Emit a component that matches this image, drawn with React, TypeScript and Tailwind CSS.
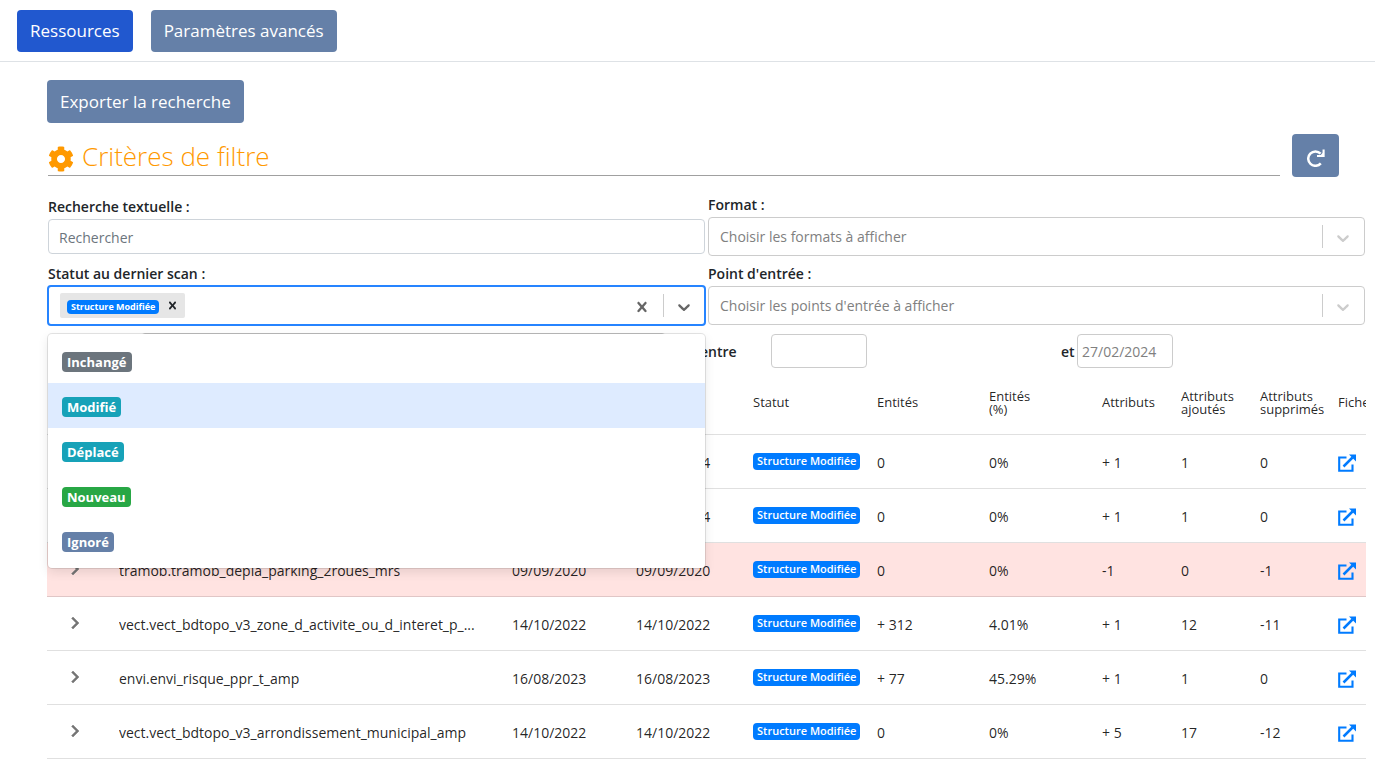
import { useState } from 'react';
import { FaCog } from 'react-icons/fa';

const statuses = [
  { label: 'Inchangé', color: 'bg-[#6c757d]' },
  { label: 'Modifié', color: 'bg-[#17a2b8]' },
  { label: 'Déplacé', color: 'bg-[#17a2b8]' },
  { label: 'Nouveau', color: 'bg-[#28a745]' },
  { label: 'Ignoré', color: 'bg-[#6580a8]' },
];

const rows = [
  { name: '', created: '', scanned: '27/02/2024', entities: '0', percent: '0%', attrs: '+ 1', added: '1', removed: '0' },
  { name: '', created: '', scanned: '27/02/2024', entities: '0', percent: '0%', attrs: '+ 1', added: '1', removed: '0' },
  {
    name: 'tramob.tramob_depla_parking_2roues_mrs',
    created: '09/09/2020',
    scanned: '09/09/2020',
    entities: '0',
    percent: '0%',
    attrs: '-1',
    added: '0',
    removed: '-1',
    alert: true,
  },
  {
    name: 'vect.vect_bdtopo_v3_zone_d_activite_ou_d_interet_p_...',
    created: '14/10/2022',
    scanned: '14/10/2022',
    entities: '+ 312',
    percent: '4.01%',
    attrs: '+ 1',
    added: '12',
    removed: '-11',
  },
  {
    name: 'envi.envi_risque_ppr_t_amp',
    created: '16/08/2023',
    scanned: '16/08/2023',
    entities: '+ 77',
    percent: '45.29%',
    attrs: '+ 1',
    added: '1',
    removed: '0',
  },
  {
    name: 'vect.vect_bdtopo_v3_arrondissement_municipal_amp',
    created: '14/10/2022',
    scanned: '14/10/2022',
    entities: '0',
    percent: '0%',
    attrs: '+ 5',
    added: '17',
    removed: '-12',
  },
];

const ChevronDown = () => (
  <svg viewBox="0 0 20 20" className="w-5 h-5 fill-current" aria-hidden="true">
    <path d="M4.516 7.548c0.436-0.446 1.043-0.481 1.576 0l3.908 3.747 3.908-3.747c0.533-0.481 1.141-0.446 1.574 0 0.436 0.445 0.408 1.197 0 1.615-0.406 0.418-4.695 4.502-4.695 4.502-0.217 0.223-0.502 0.335-0.787 0.335s-0.57-0.112-0.789-0.335c0 0-4.287-4.084-4.695-4.502s-0.436-1.17 0-1.615z" />
  </svg>
);

const Cross = ({ className }: { className: string }) => (
  <svg viewBox="0 0 20 20" className={`fill-current ${className}`} aria-hidden="true">
    <path d="M14.348 14.849c-0.469 0.469-1.229 0.469-1.697 0l-2.651-3.030-2.651 3.029c-0.469 0.469-1.229 0.469-1.697 0-0.469-0.469-0.469-1.229 0-1.697l2.758-3.15-2.759-3.152c-0.469-0.469-0.469-1.228 0-1.697s1.228-0.469 1.697 0l2.652 3.031 2.651-3.031c0.469-0.469 1.228-0.469 1.697 0s0.469 1.229 0 1.697l-2.758 3.152 2.758 3.15c0.469 0.469 0.469 1.229 0 1.698z" />
  </svg>
);

const ChevronRight = () => (
  <svg viewBox="0 0 24 24" className="w-6 h-6 fill-[#757575]" stroke="#757575" strokeWidth="0.5" aria-hidden="true">
    <path d="M10 6L8.59 7.41 13.17 12l-4.58 4.59L10 18l6-6z" />
  </svg>
);

const RefreshIcon = () => (
  <svg viewBox="0 0 18 18" className="mt-1 w-[18px] h-[18px]" fill="none" stroke="#fff" aria-hidden="true">
    <path d="M13.6 4.6A7.2 7.2 0 1 0 13.8 14.4" strokeWidth="2.5" />
    <path d="M16.6 0.5V7H10" strokeWidth="2.1" />
    <path d="M16.6 3v4h-4z" fill="#fff" stroke="none" />
  </svg>
);

const ExternalLinkIcon = () => (
  <svg viewBox="0 0 18 18" className="w-[18px] h-[18px]" fill="none" stroke="#007bff" aria-hidden="true">
    <path d="M8.5 3.5H1.2v13.3h13.3V10.5" strokeWidth="2.1" />
    <path d="M5.5 12.5l9-9" strokeWidth="2.5" />
    <path d="M11 0.5h7v7z" fill="#007bff" stroke="none" />
  </svg>
);

const SelectField = ({ id, label, placeholder }: { id: string; label: string; placeholder: string }) => (
  <div>
    <label htmlFor={id} className="block h-6 leading-6 text-sm font-semibold">
      {label}
    </label>
    <div className="relative">
      <select
        id={id}
        defaultValue=""
        className="block w-full h-[39px] appearance-none rounded border border-[#ccc] bg-white pt-px pl-[11px] pr-12 text-sm text-[#808080]"
      >
        <option value="">{placeholder}</option>
      </select>
      <div className="pointer-events-none absolute inset-y-0 right-0 flex items-center text-[#ccc]">
        <span className="h-[23px] w-px bg-[#ccc]" />
        <span className="pt-[2px] pr-3 pl-[10px]">
          <ChevronDown />
        </span>
      </div>
    </div>
  </div>
);

const StatusSelect = () => {
  const [open, setOpen] = useState(true);
  const [focused, setFocused] = useState('Modifié');
  const [selected, setSelected] = useState(['Structure Modifiée']);

  return (
    <div>
      <label htmlFor="statut" className="block h-6 leading-6 text-sm font-semibold">
        Statut au dernier scan :
      </label>
      <div className="relative -mx-px">
        <div className="-mt-px flex h-[41px] items-center rounded border-2 border-[#2684ff] bg-white">
          <div className="flex flex-1 items-center gap-1 pl-[11px]">
            {selected.map((value) => (
              <span key={value} className="flex h-[25px] items-center rounded-xs bg-[#e6e6e6] pl-[7px]">
                <span className="mt-[2px] h-[14px] rounded bg-[#007bff] px-1 text-[9px] leading-[14px] font-bold text-white">
                  {value}
                </span>
                <button
                  type="button"
                  aria-label={`Retirer ${value}`}
                  onClick={() => setSelected(selected.filter((s) => s !== value))}
                  className="ml-[6px] mr-[5px]"
                >
                  <Cross className="w-[15px] h-[15px]" />
                </button>
              </span>
            ))}
            <input
              id="statut"
              role="combobox"
              aria-expanded={open}
              aria-controls="statut-menu"
              className="min-w-0 flex-1 text-sm outline-none"
            />
          </div>
          <button type="button" aria-label="Effacer" onClick={() => setSelected([])} className="px-[11px] pt-[2px] text-[#666]">
            <Cross className="w-5 h-5" />
          </button>
          <span className="h-[23px] w-px bg-[#ccc]" />
          <button type="button" aria-label="Ouvrir la liste" onClick={() => setOpen(!open)} className="px-[10px] pt-[2px] text-[#666]">
            <ChevronDown />
          </button>
        </div>
        {open && (
          <ul
            id="statut-menu"
            role="listbox"
            className="absolute inset-x-px top-full z-10 mt-2 rounded bg-white pt-1 pb-[5px] shadow-[0_0_0_1px_rgba(0,0,0,0.1),0_4px_11px_rgba(0,0,0,0.1)]"
          >
            {statuses.map((status) => (
              <li
                key={status.label}
                role="option"
                aria-selected={selected.includes(status.label)}
                onMouseEnter={() => setFocused(status.label)}
                className={`flex h-[45px] items-center px-[14px] pt-[2px] ${focused === status.label ? 'bg-[#deebff]' : ''}`}
              >
                <span className={`h-5 rounded px-[5px] text-[13px] leading-5 font-bold text-white ${status.color}`}>
                  {status.label}
                </span>
              </li>
            ))}
          </ul>
        )}
      </div>
    </div>
  );
};

const App = () => {
  return (
    <div className="min-h-[760px] bg-white font-['Open_Sans','Noto_Sans',sans-serif] text-[#212529]">
      <nav className="mr-[2px] flex gap-[18px] border-b border-[#dee2e6] pt-[10px] pb-[9px] pl-[17px]">
        <button type="button" className="h-[42px] rounded bg-[#2158cf] px-[13px] text-[17px] text-white">
          Ressources
        </button>
        <button type="button" className="h-[42px] rounded bg-[#6580a8] px-[13px] text-[17px] text-white">
          Paramètres avancés
        </button>
      </nav>

      <main className="pt-[18px] pr-[11px] pl-[47px]">
        <button type="button" className="block h-[43px] rounded bg-[#6580a8] px-[13px] text-[17px] text-white">
          Exporter la recherche
        </button>

        <div className="mt-[11px] mr-[27px] ml-px flex items-start gap-3">
          <h2 className="flex h-[42px] flex-1 items-center gap-2 border-b border-[#a0a0a0] pt-1 text-[26px] font-light text-[#ff9900]">
            <FaCog className="mt-1 w-[26px] h-[26px]" />
            Critères de filtre
          </h2>
          <button type="button" aria-label="Actualiser" className="flex h-[43px] w-[47px] items-center justify-center rounded bg-[#6580a8]">
            <RefreshIcon />
          </button>
        </div>

        <form className="mt-4 mr-px ml-px">
          <div className="grid grid-cols-2 gap-x-[3px] gap-y-[6px]">
            <div className="pt-[2px]">
              <label htmlFor="recherche" className="block h-6 leading-6 text-sm font-semibold">
                Recherche textuelle :
              </label>
              <input
                id="recherche"
                type="text"
                placeholder="Rechercher"
                className="block h-[35px] w-full rounded-sm border border-[#ced4da] px-[10px] pt-px text-sm placeholder:text-[#6c757d]"
              />
            </div>
            <SelectField id="format" label="Format :" placeholder="Choisir les formats à afficher" />
            <StatusSelect />
            <SelectField id="entree" label="Point d'entrée :" placeholder="Choisir les points d'entrée à afficher" />
          </div>

          <div className="mt-[7px] flex items-start text-sm">
            <div className="ml-[93px] h-9 w-[525px] rounded border border-[#ccc]" />
            <label htmlFor="date-debut" className="ml-[34px] w-[71px] leading-[38px] font-semibold">
              entre
            </label>
            <input id="date-debut" type="text" className="mt-px h-[34px] w-24 rounded border border-[#ccc] px-1" />
            <label htmlFor="date-fin" className="ml-[194px] w-4 leading-[38px] font-semibold">
              et
            </label>
            <input
              id="date-fin"
              type="text"
              placeholder="27/02/2024"
              className="mt-px h-[34px] w-24 rounded border border-[#ccc] px-1 placeholder:text-[#808080]"
            />
          </div>
        </form>

        <div className="mt-px overflow-hidden">
          <table className="w-[calc(100%+52px)] table-fixed text-left text-sm text-black/87">
            <colgroup>
              <col className="w-[72px]" />
              <col />
              <col className="w-[124px]" />
              <col className="w-[117px]" />
              <col className="w-[124px]" />
              <col className="w-[112px]" />
              <col className="w-[113px]" />
              <col className="w-[79px]" />
              <col className="w-[79px]" />
              <col className="w-[78px]" />
              <col className="w-20" />
            </colgroup>
            <thead>
              <tr className="h-[62px] border-b border-[#e0e0e0] text-[13px] leading-[13px] [&>th]:font-medium">
                <th />
                <th />
                <th />
                <th />
                <th>Statut</th>
                <th>Entités</th>
                <th>
                  Entités
                  <br />
                  (%)
                </th>
                <th>Attributs</th>
                <th>
                  Attributs
                  <br />
                  ajoutés
                </th>
                <th>
                  Attributs
                  <br />
                  supprimés
                </th>
                <th>Fiche</th>
              </tr>
            </thead>
            <tbody>
              {rows.map((row, index) => (
                <tr
                  key={index}
                  className={`h-[54px] border-b ${row.alert ? 'border-[#e0c6c6] bg-[#ffe3e1]' : 'border-[#e0e0e0]'}`}
                >
                  <td className="pl-4">
                    <button type="button" aria-label="Déplier" className="block">
                      <ChevronRight />
                    </button>
                  </td>
                  <td className="truncate pt-[3px] pr-6">{row.name}</td>
                  <td className="pt-[3px]">{row.created}</td>
                  <td className="pt-[3px]">{row.scanned}</td>
                  <td>
                    <span className="block h-[17px] w-fit rounded bg-[#007bff] px-1 text-[11px] leading-4 font-semibold text-white">
                      Structure Modifiée
                    </span>
                  </td>
                  <td className="pt-[3px]">{row.entities}</td>
                  <td className="pt-[3px]">{row.percent}</td>
                  <td className="pt-[3px]">{row.attrs}</td>
                  <td className="pt-[3px]">{row.added}</td>
                  <td className="pt-[3px]">{row.removed}</td>
                  <td className="pt-1">
                    <a href="#fiche" aria-label="Ouvrir la fiche" className="block w-fit">
                      <ExternalLinkIcon />
                    </a>
                  </td>
                </tr>
              ))}
            </tbody>
          </table>
        </div>
      </main>
    </div>
  );
};

export default App;
